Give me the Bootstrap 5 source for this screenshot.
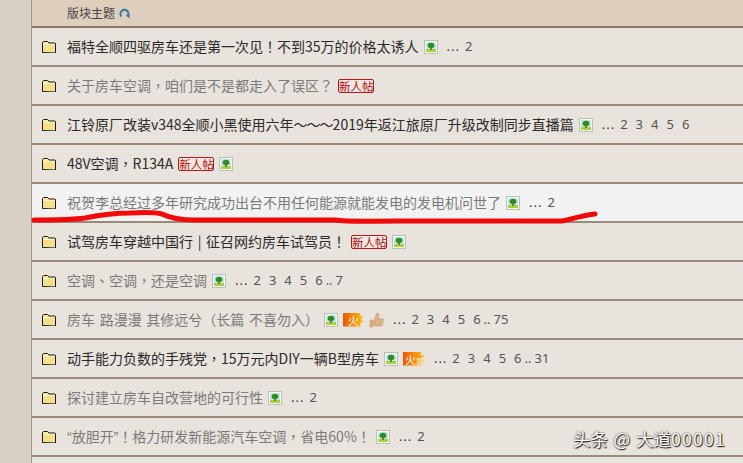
<!DOCTYPE html>
<html lang="zh-CN">
<head>
  <meta charset="UTF-8">
  <meta name="viewport" content="width=device-width, initial-scale=1.0">
  <title>版块主题</title>
  <link href="https://cdn.jsdelivr.net/npm/bootstrap@5.3.0/dist/css/bootstrap.min.css" rel="stylesheet">
  <style>
    body { background: #d8d0c4; font-family: "Noto Sans CJK TC", "Noto Sans", sans-serif; overflow: hidden; height: 463px; }
    .forum-list { margin-left: 31px; border-left: 1px solid #a39485; background: #e8e3dc; min-height: 463px; }
    .forum-head { height: 28px; background: #ddcfbc; border-bottom: 2px solid #8c7b6b; padding-left: 35px; font-size: 12px; color: #444; }
    .forum-row { height: 39px; border-bottom: 2px solid #9a8a7c; padding-left: 10px; font-size: 14px; color: #2a2a2a; }
    .forum-row.muted-row { color: #7a7a7a; }
    .forum-row.hover-row { background: #f2f2f2; }
    .folder-ico { width: 14px; height: 12px; margin-right: 11px; flex: none; }
    .thread-title { white-space: nowrap; word-spacing: 1.5px; }
    .thread-title .tilde { letter-spacing: -1px; }
    .thread-title .quote-mark { font-family: "Liberation Sans", sans-serif; }
    .pic-ico { width: 14px; height: 14px; margin-left: 5px; flex: none; }
    .new-tag { width: 36px; height: 14px; margin-left: 5px; border: 1px solid #b01a1a; border-radius: 2px; color: #a80f0f; font-size: 11.5px; line-height: 12px; text-align: center; flex: none; background: #f4e6e0; white-space: nowrap; }
    .fire-tag { height: 14px; margin-left: 5px; background: linear-gradient(90deg, #e85a08, #fba40e 75%, #f6d25a); color: #fff; font-size: 11px; line-height: 14px; padding-left: 5px; flex: none; clip-path: polygon(0 0, 85% 0, 80% 22%, 100% 30%, 86% 50%, 100% 65%, 82% 78%, 85% 100%, 0 100%); }
    .fire-a { width: 21px; }
    .fire-b { width: 22px; white-space: nowrap; padding-left: 2px; }
    .fire-b .fire-sub { font-size: 8px; }
    .thumb-ico { width: 15px; height: 16px; margin-left: 5px; flex: none; }
    .page-links { margin-left: 9px; font-family: "Noto Sans", sans-serif; font-size: 13px; color: #555; white-space: nowrap; }
    .page-links span { margin-right: 8px; }
    .page-links .dots { margin-right: 5px; color: #333; letter-spacing: 1px; }
    .page-links .sep { margin-right: 3px; }
    .red-mark { position: absolute; left: 0; top: 0; pointer-events: none; }
    .wm-text { position: absolute; left: 573px; top: 425px; color: #fff; font-size: 17.5px; line-height: 28px; word-spacing: 1.5px; text-shadow: 0 0 2px #222, 1px 1px 1px #222; white-space: nowrap; }
    .wm-text .wm-at { letter-spacing: 6px; }
    .wm-text .wm-num { letter-spacing: 1.300px; }
  </style>
</head>
<body>
  <svg width="0" height="0" class="d-block">
    <defs>
      <symbol id="folder" viewBox="0 0 14 12">
        <path d="M.5 11.5V1.5l1-1h4l1.500 1.500h6l.5.5v9.500z" fill="#f6e9a0" stroke="#1e1a08"/>
        <path d="M1.500 4h11.500v7H1.500z" fill="#f3e08c"/>
        <path d="M1 3.500h12" stroke="#fff6c8"/>
      </symbol>
      <symbol id="pic" viewBox="0 0 14 14">
        <rect x=".5" y=".5" width="13" height="13" fill="#f6f8f2" stroke="#b9c2b0"/>
        <rect x="2" y="2" width="10" height="10" fill="#c4e4ee"/>
        <rect x="2" y="9" width="10" height="3" fill="#a6d040"/>
        <path d="M6.200 7h1.600v3H6.200z" fill="#8a5a1c"/>
        <ellipse cx="7" cy="5.500" rx="3.400" ry="2.700" fill="#2f8f1e"/>
      </symbol>
    </defs>
  </svg>

  <div class="forum-list">
    <div class="forum-head d-flex align-items-center">
      版块主题
      <svg class="ms-1" width="11" height="11" viewBox="0 0 11 11"><path d="M2.500 8.500A4 4 0 1 1 8.500 8.500" fill="none" stroke="#3d74a8" stroke-width="2"/><path d="M6.500 6.500h4V10.500z" fill="#3d74a8"/></svg>
    </div>

    <div class="forum-row d-flex align-items-center">
      <svg class="folder-ico"><use href="#folder"/></svg>
      <span class="thread-title">福特全顺四驱房车还是第一次见<span lang="zh-TW">！</span>不到35万的价格太诱人</span>
      <svg class="pic-ico"><use href="#pic"/></svg>
      <div class="page-links"><span class="dots">...</span><span>2</span></div>
    </div>

    <div class="forum-row muted-row d-flex align-items-center">
      <svg class="folder-ico"><use href="#folder"/></svg>
      <span class="thread-title">关于房车空调<span lang="zh-TW">，</span>咱们是不是都走入了误区<span lang="zh-TW">？</span></span>
      <div class="new-tag">新人帖</div>
    </div>

    <div class="forum-row d-flex align-items-center">
      <svg class="folder-ico"><use href="#folder"/></svg>
      <span class="thread-title">江铃原厂改装v348全顺小黑使用六年<span class="tilde">～～～</span>2019年返江旅原厂升级改制同步直播篇</span>
      <svg class="pic-ico"><use href="#pic"/></svg>
      <div class="page-links"><span class="dots">...</span><span>2</span><span>3</span><span>4</span><span>5</span><span>6</span></div>
    </div>

    <div class="forum-row d-flex align-items-center">
      <svg class="folder-ico"><use href="#folder"/></svg>
      <span class="thread-title">48V空调<span lang="zh-TW">，</span>R134A</span>
      <div class="new-tag">新人帖</div>
      <svg class="pic-ico"><use href="#pic"/></svg>
    </div>

    <div class="forum-row muted-row hover-row d-flex align-items-center">
      <svg class="folder-ico"><use href="#folder"/></svg>
      <span class="thread-title">祝贺李总经过多年研究成功出台不用任何能源就能发电的发电机问世了</span>
      <svg class="pic-ico"><use href="#pic"/></svg>
      <div class="page-links"><span class="dots">...</span><span>2</span></div>
    </div>

    <div class="forum-row d-flex align-items-center">
      <svg class="folder-ico"><use href="#folder"/></svg>
      <span class="thread-title">试驾房车穿越中国行 | 征召网约房车试驾员<span lang="zh-TW">！</span></span>
      <div class="new-tag">新人帖</div>
      <svg class="pic-ico"><use href="#pic"/></svg>
    </div>

    <div class="forum-row muted-row d-flex align-items-center">
      <svg class="folder-ico"><use href="#folder"/></svg>
      <span class="thread-title">空调<span lang="zh-TW">、</span>空调<span lang="zh-TW">，</span>还是空调</span>
      <svg class="pic-ico"><use href="#pic"/></svg>
      <div class="page-links"><span class="dots">...</span><span>2</span><span>3</span><span>4</span><span>5</span><span class="sep">6</span><span class="sep">..</span><span>7</span></div>
    </div>

    <div class="forum-row muted-row d-flex align-items-center">
      <svg class="folder-ico"><use href="#folder"/></svg>
      <span class="thread-title">房车 路漫漫 其修远兮<span lang="zh-TW">（</span>长篇 不喜勿入<span lang="zh-TW">）</span></span>
      <svg class="pic-ico"><use href="#pic"/></svg>
      <div class="fire-tag fire-a">火</div>
      <svg class="thumb-ico" viewBox="0 0 15 16"><path d="M1 8h3v7H1zM5 8l3-7c1.500 0 2.200 1 1.700 2.800L9.200 7h4.300c1 0 1.200 1.200.5 1.800.6.700.3 1.600-.3 1.900.3.800 0 1.500-.6 1.800.1 1-.4 1.500-1.300 1.500H7c-1 0-2-.5-2-1z" fill="#dcb184" stroke="#c49668" stroke-width=".6"/></svg>
      <div class="page-links"><span class="dots">...</span><span>2</span><span>3</span><span>4</span><span>5</span><span class="sep">6</span><span class="sep">..</span><span>75</span></div>
    </div>

    <div class="forum-row d-flex align-items-center">
      <svg class="folder-ico"><use href="#folder"/></svg>
      <span class="thread-title">动手能力负数的手残党<span lang="zh-TW">，</span>15万元内DIY一辆B型房车</span>
      <svg class="pic-ico"><use href="#pic"/></svg>
      <div class="fire-tag fire-b">火<span class="fire-sub">皿</span></div>
      <div class="page-links"><span class="dots">...</span><span>2</span><span>3</span><span>4</span><span>5</span><span class="sep">6</span><span class="sep">..</span><span>31</span></div>
    </div>

    <div class="forum-row muted-row d-flex align-items-center">
      <svg class="folder-ico"><use href="#folder"/></svg>
      <span class="thread-title">探讨建立房车自改营地的可行性</span>
      <svg class="pic-ico"><use href="#pic"/></svg>
      <div class="page-links"><span class="dots">...</span><span>2</span></div>
    </div>

    <div class="forum-row muted-row d-flex align-items-center">
      <svg class="folder-ico"><use href="#folder"/></svg>
      <span class="thread-title"><span class="quote-mark">“</span>放胆开<span class="quote-mark">”</span><span lang="zh-TW">！</span>格力研发新能源汽车空调<span lang="zh-TW">，</span>省电60%<span lang="zh-TW">！</span></span>
      <svg class="pic-ico"><use href="#pic"/></svg>
      <div class="page-links"><span class="dots">...</span><span>2</span></div>
    </div>
  </div>

  <svg class="red-mark" width="743" height="463">
    <path d="M34 220C55 220 70 220 85 218C100 215 115 213 130 213C145 212 155 212 162 214C170 218 178 220 195 220C240 220 300 220 335 220C350 222 365 221 400 221C450 221 520 221 562 221C575 218 585 215 595 214" fill="none" stroke="#f00a0a" stroke-width="5" stroke-linecap="round"/>
  </svg>
  <div class="wm-text">头条 <span class="wm-at">@</span>大道<span class="wm-num">00001</span></div>
</body>
</html>
